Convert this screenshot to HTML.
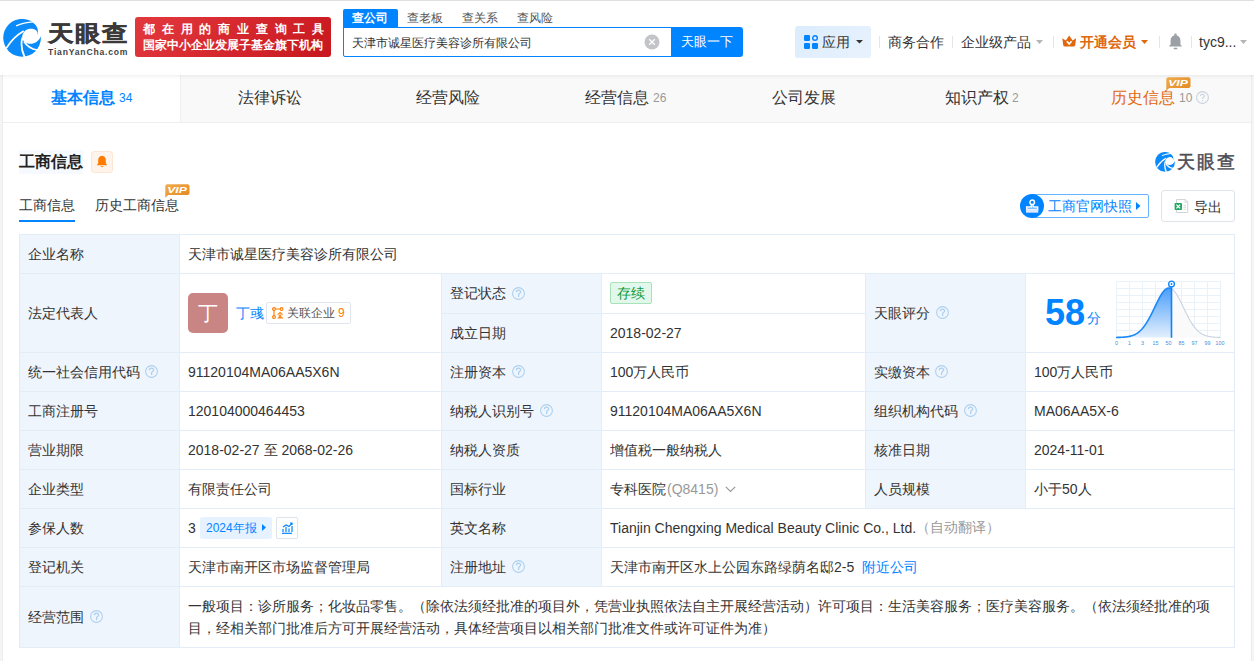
<!DOCTYPE html>
<html><head><meta charset="utf-8">
<style>
*{margin:0;padding:0;box-sizing:border-box}
html,body{width:1254px;height:661px;overflow:hidden;background:#f5f5f5;font-family:"Liberation Sans",sans-serif;color:#333;font-size:14px}
.a{position:absolute;white-space:nowrap}
#hdr{position:absolute;left:0;top:0;width:1254px;height:75px;background:#fff;box-shadow:0 1px 4px rgba(0,0,0,.08);z-index:3}
#tabs{position:absolute;left:3px;top:75px;width:1248px;height:48px;background:#f9f9f9;border-bottom:1px solid #efefef}
.tab{position:absolute;top:0;height:47px;line-height:46px;font-size:16px;color:#333;text-align:center}
.tt{top:75px;height:47px;line-height:46px;font-size:16px;color:#333}
.tn{top:75px;height:47px;line-height:46px;font-size:12px;color:#999}
.tab .n{font-size:12px;color:#999;margin-left:4px;position:relative;top:-1px}
#card{position:absolute;left:3px;top:123px;width:1248px;height:538px;background:#fff}
.cell{position:absolute;border-right:1px solid #e2edf7;border-bottom:1px solid #e2edf7;padding-left:8px;padding-top:1px;display:flex;align-items:center}
.lab{background:#eff5fc}
.lat{padding-top:0;padding-bottom:1px}
.qi{margin-left:7px;position:relative;top:-1px;flex:none}
.q{display:inline-block;width:13px;height:13px;border:1px solid #b8cde3;border-radius:50%;color:#a9c0d8;font-size:9px;line-height:11px;text-align:center;margin-left:6px;vertical-align:middle}
</style></head><body>
<div id="hdr">
  <div class="a" style="left:0;top:0;width:1254px;height:1px;background:#dfe0de"></div>
  <!-- logo -->
  <svg class="a" style="left:3px;top:19px" width="38" height="38" viewBox="44 59 558 558">
    <circle cx="324" cy="335" r="277" fill="#0b8bfa"/>
    <path d="M548 288 C565 225 495 192 432 204 C372 216 330 262 326 322 C324 372 362 412 430 422 C500 428 568 392 602 312 L640 300 L620 250 Z" fill="#fff"/>
    <path d="M92 488 C160 380 250 292 348 236" stroke="#fff" stroke-width="24" fill="none"/>
    <path d="M362 620 C318 525 302 425 330 330" stroke="#fff" stroke-width="26" fill="none"/>
    <path d="M352 390 C398 462 462 502 545 515" stroke="#fff" stroke-width="24" fill="none"/>
    <path d="M236 160 C320 122 400 106 490 100" stroke="#fff" stroke-width="18" fill="none"/>
    <path d="M470 98 C545 140 572 220 548 288 L660 300 L660 40 Z" fill="#fff"/>
  </svg>
  <div class="a" style="left:48px;top:20px;font-size:26px;line-height:30px;font-weight:bold;color:#3d3939;letter-spacing:1px;-webkit-text-stroke:0.5px #3d3939;transform:scaleY(0.86);transform-origin:0 0">天眼查</div>
  <div class="a" style="left:48px;top:47px;font-size:8.6px;font-weight:bold;color:#444;letter-spacing:0.8px">TianYanCha.com</div>
  <div class="a" style="left:135px;top:17px;width:196px;height:40px;border-radius:3px;background:linear-gradient(135deg,#e2393e,#c8171e)"></div>
  <div class="a" style="left:143px;top:21px;font-size:12px;font-weight:bold;color:#fff;letter-spacing:6.8px">都在用的商业查询工具</div>
  <div class="a" style="left:143px;top:37px;font-size:12.3px;font-weight:bold;color:#fff">国家中小企业发展子基金旗下机构</div>
  <!-- search -->
  <div class="a" style="left:343px;top:9px;width:55px;height:19px;background:#0084ff;border-radius:2px 2px 0 0"></div>
  <div class="a" style="left:352px;top:10px;font-size:12px;line-height:17px;color:#fff;font-weight:bold">查公司</div>
  <div class="a" style="left:407px;top:10px;font-size:12px;line-height:17px;color:#555">查老板</div>
  <div class="a" style="left:462px;top:10px;font-size:12px;line-height:17px;color:#555">查关系</div>
  <div class="a" style="left:517px;top:10px;font-size:12px;line-height:17px;color:#555">查风险</div>
  <div class="a" style="left:343px;top:27px;width:330px;height:30px;border:1px solid #0084ff;border-radius:0 0 0 2px;background:#fff"></div>
  <div class="a" style="left:352px;top:28px;font-size:12px;line-height:30px;color:#333">天津市诚星医疗美容诊所有限公司</div>
  <svg class="a" style="left:644px;top:34px" width="16" height="16" viewBox="0 0 16 16"><circle cx="8" cy="8" r="7.5" fill="#c3c4c8"/><path d="M5.2 5.2L10.8 10.8M10.8 5.2L5.2 10.8" stroke="#fff" stroke-width="1.3"/></svg>
  <div class="a" style="left:671px;top:27px;width:72px;height:30px;background:#0084ff;border-radius:0 3px 3px 0;color:#fff;font-size:12.5px;line-height:30px;text-align:center">天眼一下</div>
  <!-- right nav -->
  <div class="a" style="left:795px;top:26px;width:76px;height:32px;border-radius:3px;background:linear-gradient(135deg,#dcecfd,#e8f2fd)"></div>
  <svg class="a" style="left:804px;top:35px" width="14" height="14" viewBox="0 0 14 14"><rect x="0" y="0" width="6" height="6" rx="1.2" fill="#0084ff"/><circle cx="11" cy="3" r="2.3" fill="none" stroke="#0084ff" stroke-width="1.4"/><rect x="0" y="8" width="6" height="6" rx="1.2" fill="#0084ff"/><rect x="8" y="8" width="6" height="6" rx="1.2" fill="#0084ff"/></svg>
  <div class="a" style="left:822px;top:26px;font-size:14px;line-height:32px;color:#333">应用</div>
  <svg class="a" style="left:856px;top:40px" width="7" height="4" viewBox="0 0 7 4"><path d="M0 0H7L3.5 3.5z" fill="#333"/></svg>
  <div class="a" style="left:879px;top:36px;width:1px;height:12px;background:#e5e5e5"></div>
  <div class="a" style="left:888px;top:26px;font-size:14px;line-height:32px;color:#333">商务合作</div>
  <div class="a" style="left:952px;top:36px;width:1px;height:12px;background:#e5e5e5"></div>
  <div class="a" style="left:961px;top:26px;font-size:14px;line-height:32px;color:#333">企业级产品</div>
  <svg class="a" style="left:1036px;top:40px" width="7" height="4" viewBox="0 0 7 4"><path d="M0 0H7L3.5 4z" fill="#b5b5b5"/></svg>
  <div class="a" style="left:1053px;top:36px;width:1px;height:12px;background:#e5e5e5"></div>
  <svg class="a" style="left:1062px;top:35px" width="15" height="12" viewBox="0 0 15 12"><path d="M0.3 3.3L3.8 5.6L7.2 0.4L10.6 5.6L14.1 3.3L13.2 10Q13 11.5 11.3 11.5H3.1Q1.4 11.5 1.2 10Z" fill="#e0660c"/><path d="M4.8 6.2L7.2 8.9L9.6 6.2" fill="none" stroke="#fff" stroke-width="1.7"/></svg>
  <div class="a" style="left:1080px;top:26px;font-size:14px;line-height:32px;color:#e0680e;font-weight:bold">开通会员</div>
  <svg class="a" style="left:1141px;top:40px" width="7" height="4" viewBox="0 0 7 4"><path d="M0 0H7L3.5 4z" fill="#e0680e"/></svg>
  <div class="a" style="left:1159px;top:36px;width:1px;height:12px;background:#e5e5e5"></div>
  <svg class="a" style="left:1168px;top:33px" width="15" height="17" viewBox="0 0 15 17"><circle cx="7.5" cy="1.6" r="1.2" fill="#9b9fa6"/><path d="M7.5 2.2C4.2 2.2 2.6 4.8 2.6 7.6V11.4L1 13.2V13.6H14V13.2L12.4 11.4V7.6C12.4 4.8 10.8 2.2 7.5 2.2z" fill="#9b9fa6"/><rect x="5.6" y="14.8" width="3.8" height="1.5" rx="0.7" fill="#9b9fa6"/></svg>
  <div class="a" style="left:1191px;top:36px;width:1px;height:12px;background:#e5e5e5"></div>
  <div class="a" style="left:1199px;top:26px;font-size:14px;line-height:32px;color:#333">tyc9...</div>
  <svg class="a" style="left:1240px;top:40px" width="7" height="4" viewBox="0 0 7 4"><path d="M0 0H7L3.5 4z" fill="#b5b5b5"/></svg>
</div>

<div id="tabs">
  <div class="tab" style="left:0;width:177px;background:#fff"></div>
  <div class="tab" style="left:177px;width:1px;background:#efefef"></div>
</div>
<div class="a tt" style="left:51px;color:#0084ff;font-weight:bold">基本信息</div><div class="a tn" style="left:119px;color:#0084ff">34</div>
<div class="a tt" style="left:238px">法律诉讼</div>
<div class="a tt" style="left:416px">经营风险</div>
<div class="a tt" style="left:585px">经营信息</div><div class="a tn" style="left:653px">26</div>
<div class="a tt" style="left:772px">公司发展</div>
<div class="a tt" style="left:945px">知识产权</div><div class="a tn" style="left:1012px">2</div>
<div class="a tt" style="left:1111px;color:#e0680e">历史信息</div><div class="a tn" style="left:1179px">10</div>
<svg class="a" style="left:1196px;top:91px" width="13" height="13" viewBox="0 0 13 13"><circle cx="6.5" cy="6.5" r="5.9" fill="none" stroke="#c9d3dd" stroke-width="1.1"/><path d="M4.6 5.1C4.6 3.9 5.4 3.3 6.5 3.3C7.6 3.3 8.4 4 8.4 5C8.4 6.1 7.1 6.3 6.6 7.1V8.1" fill="none" stroke="#c9d3dd" stroke-width="1.1"/><circle cx="6.6" cy="9.6" r="0.65" fill="#c9d3dd"/></svg>

<svg class="a" style="left:1166px;top:77px;z-index:2" width="25" height="14" viewBox="0 0 25 14"><defs><linearGradient id="vg2" x1="0" y1="0" x2="1" y2="1"><stop offset="0" stop-color="#f1ad4e"/><stop offset="1" stop-color="#e3861c"/></linearGradient></defs><path d="M2 0.3H22.5A2 2 0 0 1 24.5 2.3V9A2 2 0 0 1 22.5 11H3.2L0.3 13.8V2.3A2 2 0 0 1 2 0.3z" fill="url(#vg2)"/><text x="2.2" y="9.2" textLength="19.6" lengthAdjust="spacingAndGlyphs" font-family="Liberation Sans" font-size="9.3" font-weight="bold" font-style="italic" fill="#fff">VIP</text></svg>
<div id="card"></div>
<div class="a" style="left:2px;top:75px;width:1px;height:586px;background:#ececec"></div>
<div class="a" style="left:1251px;top:75px;width:1px;height:586px;background:#ececec"></div>
<!-- section header -->
<div class="a" style="left:19px;top:150px;width:64px;height:24px;background:#f6faff"></div>
<div class="a" style="left:19px;top:150px;font-size:16px;line-height:24px;font-weight:bold;color:#222">工商信息</div>
<div class="a" style="left:91px;top:151px;width:22px;height:22px;background:#fff4ec;border:1px solid #ffe6d3;border-radius:3px"></div>
<svg class="a" style="left:96px;top:155px" width="12" height="13" viewBox="0 0 12 13"><path d="M6 0.8C3.3 0.8 2.2 3 2.2 5.3V8.2L0.8 10.3H11.2L9.8 8.2V5.3C9.8 3 8.7 0.8 6 0.8z" fill="#ff7a00"/><path d="M4.3 11.3Q6 13.2 7.7 11.3z" fill="#ff7a00"/></svg>
<div class="a" style="left:19px;top:196px;font-size:14px;line-height:18px;color:#333">工商信息</div>
<div class="a" style="left:19px;top:220px;width:56px;height:2px;background:#0084ff"></div>
<div class="a" style="left:95px;top:196px;font-size:14px;line-height:18px;color:#333">历史工商信息</div>
<svg class="a" style="left:165px;top:184px;z-index:2" width="25" height="14" viewBox="0 0 25 14"><defs><linearGradient id="vg" x1="0" y1="0" x2="1" y2="1"><stop offset="0" stop-color="#f1ad4e"/><stop offset="1" stop-color="#e3861c"/></linearGradient></defs><path d="M2 0.3H22.5A2 2 0 0 1 24.5 2.3V9A2 2 0 0 1 22.5 11H3.2L0.3 13.8V2.3A2 2 0 0 1 2 0.3z" fill="url(#vg)"/><text x="2.2" y="9.2" textLength="19.6" lengthAdjust="spacingAndGlyphs" font-family="Liberation Sans" font-size="9.3" font-weight="bold" font-style="italic" fill="#fff">VIP</text></svg>
<!-- right logo -->
<svg class="a" style="left:1155px;top:152px" width="20" height="20" viewBox="44 59 558 558">
    <circle cx="324" cy="335" r="277" fill="#0b8bfa"/>
    <path d="M548 288 C565 225 495 192 432 204 C372 216 330 262 326 322 C324 372 362 412 430 422 C500 428 568 392 602 312 L640 300 L620 250 Z" fill="#fff"/>
    <path d="M92 488 C160 380 250 292 348 236" stroke="#fff" stroke-width="34" fill="none"/>
    <path d="M362 620 C318 525 302 425 330 330" stroke="#fff" stroke-width="36" fill="none"/>
    <path d="M352 390 C398 462 462 502 545 515" stroke="#fff" stroke-width="34" fill="none"/>
    <path d="M236 160 C320 122 400 106 490 100" stroke="#fff" stroke-width="28" fill="none"/>
    <path d="M470 98 C545 140 572 220 548 288 L660 300 L660 40 Z" fill="#fff"/>
  </svg>
<div class="a" style="left:1177px;top:150px;font-size:18px;line-height:24px;font-weight:normal;color:#4d4d55;letter-spacing:2px;-webkit-text-stroke:0.5px #4d4d55">天眼查</div>
<!-- actions -->
<div class="a" style="left:1030px;top:194px;width:119px;height:24px;border:1px solid #66b3ff;border-radius:2px;background:#fff"></div>
<div class="a" style="left:1020px;top:194px;width:24px;height:24px;border-radius:50%;background:#0084ff"></div>
<svg class="a" style="left:1025px;top:199px" width="14" height="14" viewBox="0 0 14 14"><circle cx="7.2" cy="3.3" r="2.3" fill="none" stroke="#fff" stroke-width="1.5"/><path d="M6.3 5.5V7.9H1.7V10.3H12.6V7.9H8.1V5.5" fill="none" stroke="#fff" stroke-width="1.5"/><rect x="1" y="10.3" width="12.3" height="3.4" fill="#dce9fd"/></svg>
<div class="a" style="left:1048px;top:194px;font-size:14px;line-height:24px;color:#0084ff">工商官网快照</div>
<svg class="a" style="left:1136px;top:202px" width="5" height="8" viewBox="0 0 5 8"><path d="M0 0L4.5 4L0 8z" fill="#0084ff"/></svg>
<div class="a" style="left:1161px;top:190px;width:74px;height:32px;border:1px solid #dfe3ea;border-radius:3px;background:#fff"></div>
<svg class="a" style="left:1174px;top:199px" width="15" height="15" viewBox="0 0 15 15"><path d="M2.5 0.5H11.2L13.7 3V13.5H2.5z" fill="#fff" stroke="#d2d4d8" stroke-width="1"/><path d="M11 0.5V3.2H13.7" fill="none" stroke="#d2d4d8" stroke-width="0.9"/><rect x="0.6" y="4" width="7.4" height="7" rx="0.8" fill="#21a865"/><path d="M2.4 5.6L6.2 9.4M6.2 5.6L2.4 9.4" stroke="#fff" stroke-width="1.3"/><path d="M9.5 6.5H12M9.5 8.4H12M9.5 10.3H12" stroke="#d6d6d6" stroke-width="0.9"/></svg>
<div class="a" style="left:1194px;top:191px;font-size:14px;line-height:32px;color:#333">导出</div>
<!-- table -->
<div id="tbl" class="a" style="left:19px;top:234px;width:1216px;height:414px;border-top:1px solid #e2edf7;border-left:1px solid #e2edf7"></div>
<div class="cell lab" style="left:20px;top:235px;width:160px;height:39px;">企业名称</div>
<div class="cell" style="left:180px;top:235px;width:1055px;height:39px;">天津市诚星医疗美容诊所有限公司</div>
<div class="cell lab" style="left:20px;top:274px;width:160px;height:79px;">法定代表人</div>
<div class="cell" style="left:180px;top:274px;width:262px;height:79px;"></div>
<div class="cell lab" style="left:442px;top:274px;width:160px;height:40px;">登记状态</div>
<div class="cell" style="left:602px;top:274px;width:264px;height:40px;"></div>
<div class="cell lab" style="left:442px;top:314px;width:160px;height:39px;">成立日期</div>
<div class="cell lat" style="left:602px;top:314px;width:264px;height:39px;">2018-02-27</div>
<div class="cell lab" style="left:866px;top:274px;width:160px;height:79px;">天眼评分</div>
<div class="cell" style="left:1026px;top:274px;width:209px;height:79px;"></div>
<div class="cell lab" style="left:20px;top:353px;width:160px;height:39px;">统一社会信用代码</div>
<div class="cell lat" style="left:180px;top:353px;width:262px;height:39px;">91120104MA06AA5X6N</div>
<div class="cell lab" style="left:442px;top:353px;width:160px;height:39px;">注册资本</div>
<div class="cell" style="left:602px;top:353px;width:264px;height:39px;">100万人民币</div>
<div class="cell lab" style="left:866px;top:353px;width:160px;height:39px;">实缴资本</div>
<div class="cell" style="left:1026px;top:353px;width:209px;height:39px;">100万人民币</div>
<div class="cell lab" style="left:20px;top:392px;width:160px;height:39px;">工商注册号</div>
<div class="cell lat" style="left:180px;top:392px;width:262px;height:39px;">120104000464453</div>
<div class="cell lab" style="left:442px;top:392px;width:160px;height:39px;">纳税人识别号</div>
<div class="cell lat" style="left:602px;top:392px;width:264px;height:39px;">91120104MA06AA5X6N</div>
<div class="cell lab" style="left:866px;top:392px;width:160px;height:39px;">组织机构代码</div>
<div class="cell lat" style="left:1026px;top:392px;width:209px;height:39px;">MA06AA5X-6</div>
<div class="cell lab" style="left:20px;top:431px;width:160px;height:39px;">营业期限</div>
<div class="cell" style="left:180px;top:431px;width:262px;height:39px;">2018-02-27 至 2068-02-26</div>
<div class="cell lab" style="left:442px;top:431px;width:160px;height:39px;">纳税人资质</div>
<div class="cell" style="left:602px;top:431px;width:264px;height:39px;">增值税一般纳税人</div>
<div class="cell lab" style="left:866px;top:431px;width:160px;height:39px;">核准日期</div>
<div class="cell lat" style="left:1026px;top:431px;width:209px;height:39px;">2024-11-01</div>
<div class="cell lab" style="left:20px;top:470px;width:160px;height:39px;">企业类型</div>
<div class="cell" style="left:180px;top:470px;width:262px;height:39px;">有限责任公司</div>
<div class="cell lab" style="left:442px;top:470px;width:160px;height:39px;">国标行业</div>
<div class="cell" style="left:602px;top:470px;width:264px;height:39px;">专科医院</div>
<div class="cell lab" style="left:866px;top:470px;width:160px;height:39px;">人员规模</div>
<div class="cell" style="left:1026px;top:470px;width:209px;height:39px;">小于50人</div>
<div class="cell lab" style="left:20px;top:509px;width:160px;height:39px;">参保人数</div>
<div class="cell lat" style="left:180px;top:509px;width:262px;height:39px;">3</div>
<div class="cell lab" style="left:442px;top:509px;width:160px;height:39px;">英文名称</div>
<div class="cell lat" style="left:602px;top:509px;width:633px;height:39px;">Tianjin Chengxing Medical Beauty Clinic Co., Ltd.<span style="color:#999">（自动翻译）</span></div>
<div class="cell lab" style="left:20px;top:548px;width:160px;height:39px;">登记机关</div>
<div class="cell" style="left:180px;top:548px;width:262px;height:39px;">天津市南开区市场监督管理局</div>
<div class="cell lab" style="left:442px;top:548px;width:160px;height:39px;">注册地址</div>
<div class="cell" style="left:602px;top:548px;width:633px;height:39px;">天津市南开区水上公园东路绿荫名邸2-5</div>
<div class="cell lab" style="left:20px;top:587px;width:160px;height:61px;">经营范围</div>
<div class="cell" style="left:180px;top:587px;width:1055px;height:61px;"><div style="line-height:22px;white-space:nowrap;margin-top:-2px">一般项目：诊所服务；化妆品零售。（除依法须经批准的项目外，凭营业执照依法自主开展经营活动）许可项目：生活美容服务；医疗美容服务。（依法须经批准的项<br>目，经相关部门批准后方可开展经营活动，具体经营项目以相关部门批准文件或许可证件为准）</div></div>

<!-- legal rep -->
<div class="a" style="left:188px;top:293px;width:40px;height:40px;border-radius:5px;background:#c98484;color:#fff;font-size:20px;line-height:40px;text-align:center">丁</div>
<div class="a" style="left:236px;top:302px;font-size:14px;line-height:22px;color:#0084ff">丁彧</div>
<div class="a" style="left:266px;top:302px;width:85px;height:22px;border:1px solid #e1e6ee;border-radius:2px;background:#fff"></div>
<svg class="a" style="left:272px;top:307px" width="12" height="12" viewBox="0 0 12 12"><g fill="none" stroke="#ff7a00" stroke-width="1.1"><circle cx="2" cy="2" r="1.4"/><circle cx="9.6" cy="2" r="1.4"/><circle cx="2" cy="10" r="1.4"/><path d="M3.4 2H8.2M2 3.4V8.6"/><path d="M5.6 7.6L8.1 5.5L10.6 7.6"/><path d="M7.3 7.8V10.8M8.7 7.4V10.8H10.2M5.6 11H11"/></g></svg>
<div class="a" style="left:287px;top:302px;font-size:12px;line-height:22px;color:#555">关联企业</div>
<div class="a" style="left:338px;top:302px;font-size:12px;line-height:22px;color:#ff7a00">9</div>
<!-- status -->
<div class="a" style="left:610px;top:282px;width:42px;height:22px;border:1px solid #a8e2bb;border-radius:2px;background:#e1f8eb;color:#12993c;font-size:14px;line-height:20px;text-align:center">存续</div>
<!-- score -->
<div class="a" style="left:1045px;top:293px;font-size:36px;line-height:40px;font-weight:bold;color:#0084ff">58</div>
<div class="a" style="left:1087px;top:308px;font-size:14px;line-height:20px;color:#0084ff">分</div>
<svg class="a" style="left:1110px;top:278px" width="120" height="70" viewBox="0 0 120 70">
  <defs><linearGradient id="sg" x1="0" y1="0" x2="0" y2="1"><stop offset="0" stop-color="#4a9ef9"/><stop offset="1" stop-color="#e3effd"/></linearGradient></defs>
  <g stroke="#e9f1f9" stroke-width="1" fill="none">
    <path d="M6.5 3.5H110.5M6.5 10.5H110.5M6.5 17.5H110.5M6.5 24.5H110.5M6.5 31.5H110.5M6.5 38.5H110.5M6.5 45.5H110.5M6.5 52.5H110.5"/>
    <path d="M6.5 3.5V59.5M19.5 3.5V59.5M32.5 3.5V59.5M45.5 3.5V59.5M58.5 3.5V59.5M71.5 3.5V59.5M84.5 3.5V59.5M97.5 3.5V59.5M110.5 3.5V59.5"/>
  </g>
  <path d="M61.5 10.74 62.0 11.06 62.5 11.44 63.0 11.87 63.5 12.36 64.0 12.90 64.5 13.48 65.0 14.12 65.5 14.79 66.0 15.52 66.5 16.28 67.0 17.08 67.5 17.91 68.0 18.78 68.5 19.68 69.0 20.61 69.5 21.56 70.0 22.53 70.5 23.52 71.0 24.52 71.5 25.54 72.0 26.57 72.5 27.60 73.0 28.64 73.5 29.69 74.0 30.73 74.5 31.77 75.0 32.80 75.5 33.83 76.0 34.84 76.5 35.85 77.0 36.84 77.5 37.81 78.0 38.77 78.5 39.71 79.0 40.63 79.5 41.53 80.0 42.41 80.5 43.26 81.0 44.09 81.5 44.90 82.0 45.68 82.5 46.43 83.0 47.16 83.5 47.86 84.0 48.53 84.5 49.18 85.0 49.80 85.5 50.40 86.0 50.97 86.5 51.51 87.0 52.03 87.5 52.52 88.0 52.99 88.5 53.43 89.0 53.85 89.5 54.25 90.0 54.62 90.5 54.98 91.0 55.31 91.5 55.62 92.0 55.92 92.5 56.19 93.0 56.45 93.5 56.69 94.0 56.92 94.5 57.13 95.0 57.33 95.5 57.51 96.0 57.68 96.5 57.83 97.0 57.98 97.5 58.11 98.0 58.24 98.5 58.35 99.0 58.46 99.5 58.55 100.0 58.64 100.5 58.72 101.0 58.80 101.5 58.86 102.0 58.93 102.5 58.98 103.0 59.04 103.5 59.08 104.0 59.13 104.5 59.16 105.0 59.20 105.5 59.23 106.0 59.26 106.5 59.29 107.0 59.31 107.5 59.33 108.0 59.35 108.5 59.37 109.0 59.38 109.5 59.39 110.0 59.41 110.5 59.42 L110.7 59.5 L61.5 59.5z" fill="#fafafb"/>
  <path d="M61.5 10.74 62.0 11.06 62.5 11.44 63.0 11.87 63.5 12.36 64.0 12.90 64.5 13.48 65.0 14.12 65.5 14.79 66.0 15.52 66.5 16.28 67.0 17.08 67.5 17.91 68.0 18.78 68.5 19.68 69.0 20.61 69.5 21.56 70.0 22.53 70.5 23.52 71.0 24.52 71.5 25.54 72.0 26.57 72.5 27.60 73.0 28.64 73.5 29.69 74.0 30.73 74.5 31.77 75.0 32.80 75.5 33.83 76.0 34.84 76.5 35.85 77.0 36.84 77.5 37.81 78.0 38.77 78.5 39.71 79.0 40.63 79.5 41.53 80.0 42.41 80.5 43.26 81.0 44.09 81.5 44.90 82.0 45.68 82.5 46.43 83.0 47.16 83.5 47.86 84.0 48.53 84.5 49.18 85.0 49.80 85.5 50.40 86.0 50.97 86.5 51.51 87.0 52.03 87.5 52.52 88.0 52.99 88.5 53.43 89.0 53.85 89.5 54.25 90.0 54.62 90.5 54.98 91.0 55.31 91.5 55.62 92.0 55.92 92.5 56.19 93.0 56.45 93.5 56.69 94.0 56.92 94.5 57.13 95.0 57.33 95.5 57.51 96.0 57.68 96.5 57.83 97.0 57.98 97.5 58.11 98.0 58.24 98.5 58.35 99.0 58.46 99.5 58.55 100.0 58.64 100.5 58.72 101.0 58.80 101.5 58.86 102.0 58.93 102.5 58.98 103.0 59.04 103.5 59.08 104.0 59.13 104.5 59.16 105.0 59.20 105.5 59.23 106.0 59.26 106.5 59.29 107.0 59.31 107.5 59.33 108.0 59.35 108.5 59.37 109.0 59.38 109.5 59.39 110.0 59.41 110.5 59.42" fill="none" stroke="#c9d3de" stroke-width="1.1"/>
  <path d="M6.0 59.44 6.5 59.44 7.0 59.43 7.5 59.42 8.0 59.41 8.5 59.39 9.0 59.38 9.5 59.37 10.0 59.35 10.5 59.33 11.0 59.31 11.5 59.29 12.0 59.26 12.5 59.23 13.0 59.20 13.5 59.16 14.0 59.13 14.5 59.08 15.0 59.04 15.5 58.98 16.0 58.93 16.5 58.86 17.0 58.80 17.5 58.72 18.0 58.64 18.5 58.55 19.0 58.46 19.5 58.35 20.0 58.24 20.5 58.11 21.0 57.98 21.5 57.83 22.0 57.68 22.5 57.51 23.0 57.33 23.5 57.13 24.0 56.92 24.5 56.69 25.0 56.45 25.5 56.19 26.0 55.92 26.5 55.62 27.0 55.31 27.5 54.98 28.0 54.62 28.5 54.25 29.0 53.85 29.5 53.43 30.0 52.99 30.5 52.52 31.0 52.03 31.5 51.51 32.0 50.97 32.5 50.40 33.0 49.80 33.5 49.18 34.0 48.53 34.5 47.86 35.0 47.16 35.5 46.43 36.0 45.68 36.5 44.90 37.0 44.09 37.5 43.26 38.0 42.41 38.5 41.53 39.0 40.63 39.5 39.71 40.0 38.77 40.5 37.81 41.0 36.84 41.5 35.85 42.0 34.84 42.5 33.83 43.0 32.80 43.5 31.77 44.0 30.73 44.5 29.69 45.0 28.64 45.5 27.60 46.0 26.57 46.5 25.54 47.0 24.52 47.5 23.52 48.0 22.53 48.5 21.56 49.0 20.61 49.5 19.68 50.0 18.78 50.5 17.91 51.0 17.08 51.5 16.28 52.0 15.52 52.5 14.79 53.0 14.12 53.5 13.48 54.0 12.90 54.5 12.36 55.0 11.87 55.5 11.44 56.0 11.06 56.5 10.74 57.0 10.48 57.5 10.27 58.0 10.12 58.5 10.03 59.0 10.00 59.5 10.03 60.0 10.12 60.5 10.27 61.0 10.48 61.5 10.74 61.5 10.74 L61.5 59.5 L6 59.5z" fill="url(#sg)"/>
  <path d="M6.0 59.44 6.5 59.44 7.0 59.43 7.5 59.42 8.0 59.41 8.5 59.39 9.0 59.38 9.5 59.37 10.0 59.35 10.5 59.33 11.0 59.31 11.5 59.29 12.0 59.26 12.5 59.23 13.0 59.20 13.5 59.16 14.0 59.13 14.5 59.08 15.0 59.04 15.5 58.98 16.0 58.93 16.5 58.86 17.0 58.80 17.5 58.72 18.0 58.64 18.5 58.55 19.0 58.46 19.5 58.35 20.0 58.24 20.5 58.11 21.0 57.98 21.5 57.83 22.0 57.68 22.5 57.51 23.0 57.33 23.5 57.13 24.0 56.92 24.5 56.69 25.0 56.45 25.5 56.19 26.0 55.92 26.5 55.62 27.0 55.31 27.5 54.98 28.0 54.62 28.5 54.25 29.0 53.85 29.5 53.43 30.0 52.99 30.5 52.52 31.0 52.03 31.5 51.51 32.0 50.97 32.5 50.40 33.0 49.80 33.5 49.18 34.0 48.53 34.5 47.86 35.0 47.16 35.5 46.43 36.0 45.68 36.5 44.90 37.0 44.09 37.5 43.26 38.0 42.41 38.5 41.53 39.0 40.63 39.5 39.71 40.0 38.77 40.5 37.81 41.0 36.84 41.5 35.85 42.0 34.84 42.5 33.83 43.0 32.80 43.5 31.77 44.0 30.73 44.5 29.69 45.0 28.64 45.5 27.60 46.0 26.57 46.5 25.54 47.0 24.52 47.5 23.52 48.0 22.53 48.5 21.56 49.0 20.61 49.5 19.68 50.0 18.78 50.5 17.91 51.0 17.08 51.5 16.28 52.0 15.52 52.5 14.79 53.0 14.12 53.5 13.48 54.0 12.90 54.5 12.36 55.0 11.87 55.5 11.44 56.0 11.06 56.5 10.74 57.0 10.48 57.5 10.27 58.0 10.12 58.5 10.03 59.0 10.00 59.5 10.03 60.0 10.12 60.5 10.27 61.0 10.48 61.5 10.74 61.5 10.74" fill="none" stroke="#1a88fb" stroke-width="1.6"/>
  <path d="M61.5 8.5 V59.8" stroke="#0a84ff" stroke-width="1.6"/>
  <circle cx="61.5" cy="6" r="2.9" fill="#fff" stroke="#0a84ff" stroke-width="1.3"/>
  <circle cx="61.5" cy="6" r="0.9" fill="#0a84ff"/>
  <g font-family="Liberation Sans" font-size="5.3" fill="#3d8fe0" text-anchor="middle">
    <text x="6.5" y="67">0</text><text x="19.5" y="67">1</text><text x="32.5" y="67">3</text><text x="45.5" y="67">15</text><text x="58.5" y="67">50</text><text x="71.5" y="67">85</text><text x="84.5" y="67">97</text><text x="97.5" y="67">99</text><text x="110" y="67">100</text>
  </g>
</svg>
<!-- annual report -->
<div class="a" style="left:200px;top:517px;width:72px;height:22px;border-radius:2px;background:#e6f2ff"></div>
<div class="a" style="left:206px;top:517px;font-size:12px;line-height:22px;color:#0084ff">2024年报</div>
<svg class="a" style="left:262px;top:524px" width="4" height="7" viewBox="0 0 4 7"><path d="M0 0L4 3.5L0 7z" fill="#0084ff"/></svg>
<div class="a" style="left:276px;top:517px;width:22px;height:22px;border:1px solid #dde4ec;border-radius:2px;background:#fff"></div>
<svg class="a" style="left:281px;top:522px" width="12" height="12" viewBox="0 0 12 12"><g fill="none" stroke="#0084ff" stroke-width="1.2"><path d="M1 11.3H11"/><path d="M2 10V7M5 10V5M8 10V6.5M11 10V4"/><path d="M2 5L5 3L8 4.5L11 1.2M9 1H11V3"/></g></svg>

<svg class="a qa" style="left:145px;top:365px" width="13" height="13" viewBox="0 0 13 13"><circle cx="6.5" cy="6.5" r="5.9" fill="none" stroke="#add0ef" stroke-width="1.1"/><path d="M4.4 5.2C4.4 3.8 5.3 3 6.5 3C7.8 3 8.6 3.9 8.6 4.9C8.6 6.2 7.1 6.5 6.6 7.5V9.9" fill="none" stroke="#add0ef" stroke-width="1.25"/></svg>
<svg class="a qa" style="left:512px;top:287px" width="13" height="13" viewBox="0 0 13 13"><circle cx="6.5" cy="6.5" r="5.9" fill="none" stroke="#add0ef" stroke-width="1.1"/><path d="M4.4 5.2C4.4 3.8 5.3 3 6.5 3C7.8 3 8.6 3.9 8.6 4.9C8.6 6.2 7.1 6.5 6.6 7.5V9.9" fill="none" stroke="#add0ef" stroke-width="1.25"/></svg>
<svg class="a qa" style="left:936px;top:306px" width="13" height="13" viewBox="0 0 13 13"><circle cx="6.5" cy="6.5" r="5.9" fill="none" stroke="#add0ef" stroke-width="1.1"/><path d="M4.4 5.2C4.4 3.8 5.3 3 6.5 3C7.8 3 8.6 3.9 8.6 4.9C8.6 6.2 7.1 6.5 6.6 7.5V9.9" fill="none" stroke="#add0ef" stroke-width="1.25"/></svg>
<svg class="a qa" style="left:512px;top:365px" width="13" height="13" viewBox="0 0 13 13"><circle cx="6.5" cy="6.5" r="5.9" fill="none" stroke="#add0ef" stroke-width="1.1"/><path d="M4.4 5.2C4.4 3.8 5.3 3 6.5 3C7.8 3 8.6 3.9 8.6 4.9C8.6 6.2 7.1 6.5 6.6 7.5V9.9" fill="none" stroke="#add0ef" stroke-width="1.25"/></svg>
<svg class="a qa" style="left:935px;top:365px" width="13" height="13" viewBox="0 0 13 13"><circle cx="6.5" cy="6.5" r="5.9" fill="none" stroke="#add0ef" stroke-width="1.1"/><path d="M4.4 5.2C4.4 3.8 5.3 3 6.5 3C7.8 3 8.6 3.9 8.6 4.9C8.6 6.2 7.1 6.5 6.6 7.5V9.9" fill="none" stroke="#add0ef" stroke-width="1.25"/></svg>
<svg class="a qa" style="left:540px;top:404px" width="13" height="13" viewBox="0 0 13 13"><circle cx="6.5" cy="6.5" r="5.9" fill="none" stroke="#add0ef" stroke-width="1.1"/><path d="M4.4 5.2C4.4 3.8 5.3 3 6.5 3C7.8 3 8.6 3.9 8.6 4.9C8.6 6.2 7.1 6.5 6.6 7.5V9.9" fill="none" stroke="#add0ef" stroke-width="1.25"/></svg>
<svg class="a qa" style="left:964px;top:404px" width="13" height="13" viewBox="0 0 13 13"><circle cx="6.5" cy="6.5" r="5.9" fill="none" stroke="#add0ef" stroke-width="1.1"/><path d="M4.4 5.2C4.4 3.8 5.3 3 6.5 3C7.8 3 8.6 3.9 8.6 4.9C8.6 6.2 7.1 6.5 6.6 7.5V9.9" fill="none" stroke="#add0ef" stroke-width="1.25"/></svg>
<svg class="a qa" style="left:512px;top:560px" width="13" height="13" viewBox="0 0 13 13"><circle cx="6.5" cy="6.5" r="5.9" fill="none" stroke="#add0ef" stroke-width="1.1"/><path d="M4.4 5.2C4.4 3.8 5.3 3 6.5 3C7.8 3 8.6 3.9 8.6 4.9C8.6 6.2 7.1 6.5 6.6 7.5V9.9" fill="none" stroke="#add0ef" stroke-width="1.25"/></svg>
<svg class="a qa" style="left:90px;top:610px" width="13" height="13" viewBox="0 0 13 13"><circle cx="6.5" cy="6.5" r="5.9" fill="none" stroke="#add0ef" stroke-width="1.1"/><path d="M4.4 5.2C4.4 3.8 5.3 3 6.5 3C7.8 3 8.6 3.9 8.6 4.9C8.6 6.2 7.1 6.5 6.6 7.5V9.9" fill="none" stroke="#add0ef" stroke-width="1.25"/></svg>
<div class="a" style="left:667px;top:478px;font-size:14px;line-height:22px;color:#999">(Q8415)</div>
<svg class="a" style="left:725px;top:486px" width="11" height="7" viewBox="0 0 11 7"><path d="M0.8 0.8L5.5 5.5L10.2 0.8" fill="none" stroke="#999" stroke-width="1.2"/></svg>
<div class="a" style="left:862px;top:556px;font-size:14px;line-height:22px;color:#0084ff">附近公司</div>
</body></html>
